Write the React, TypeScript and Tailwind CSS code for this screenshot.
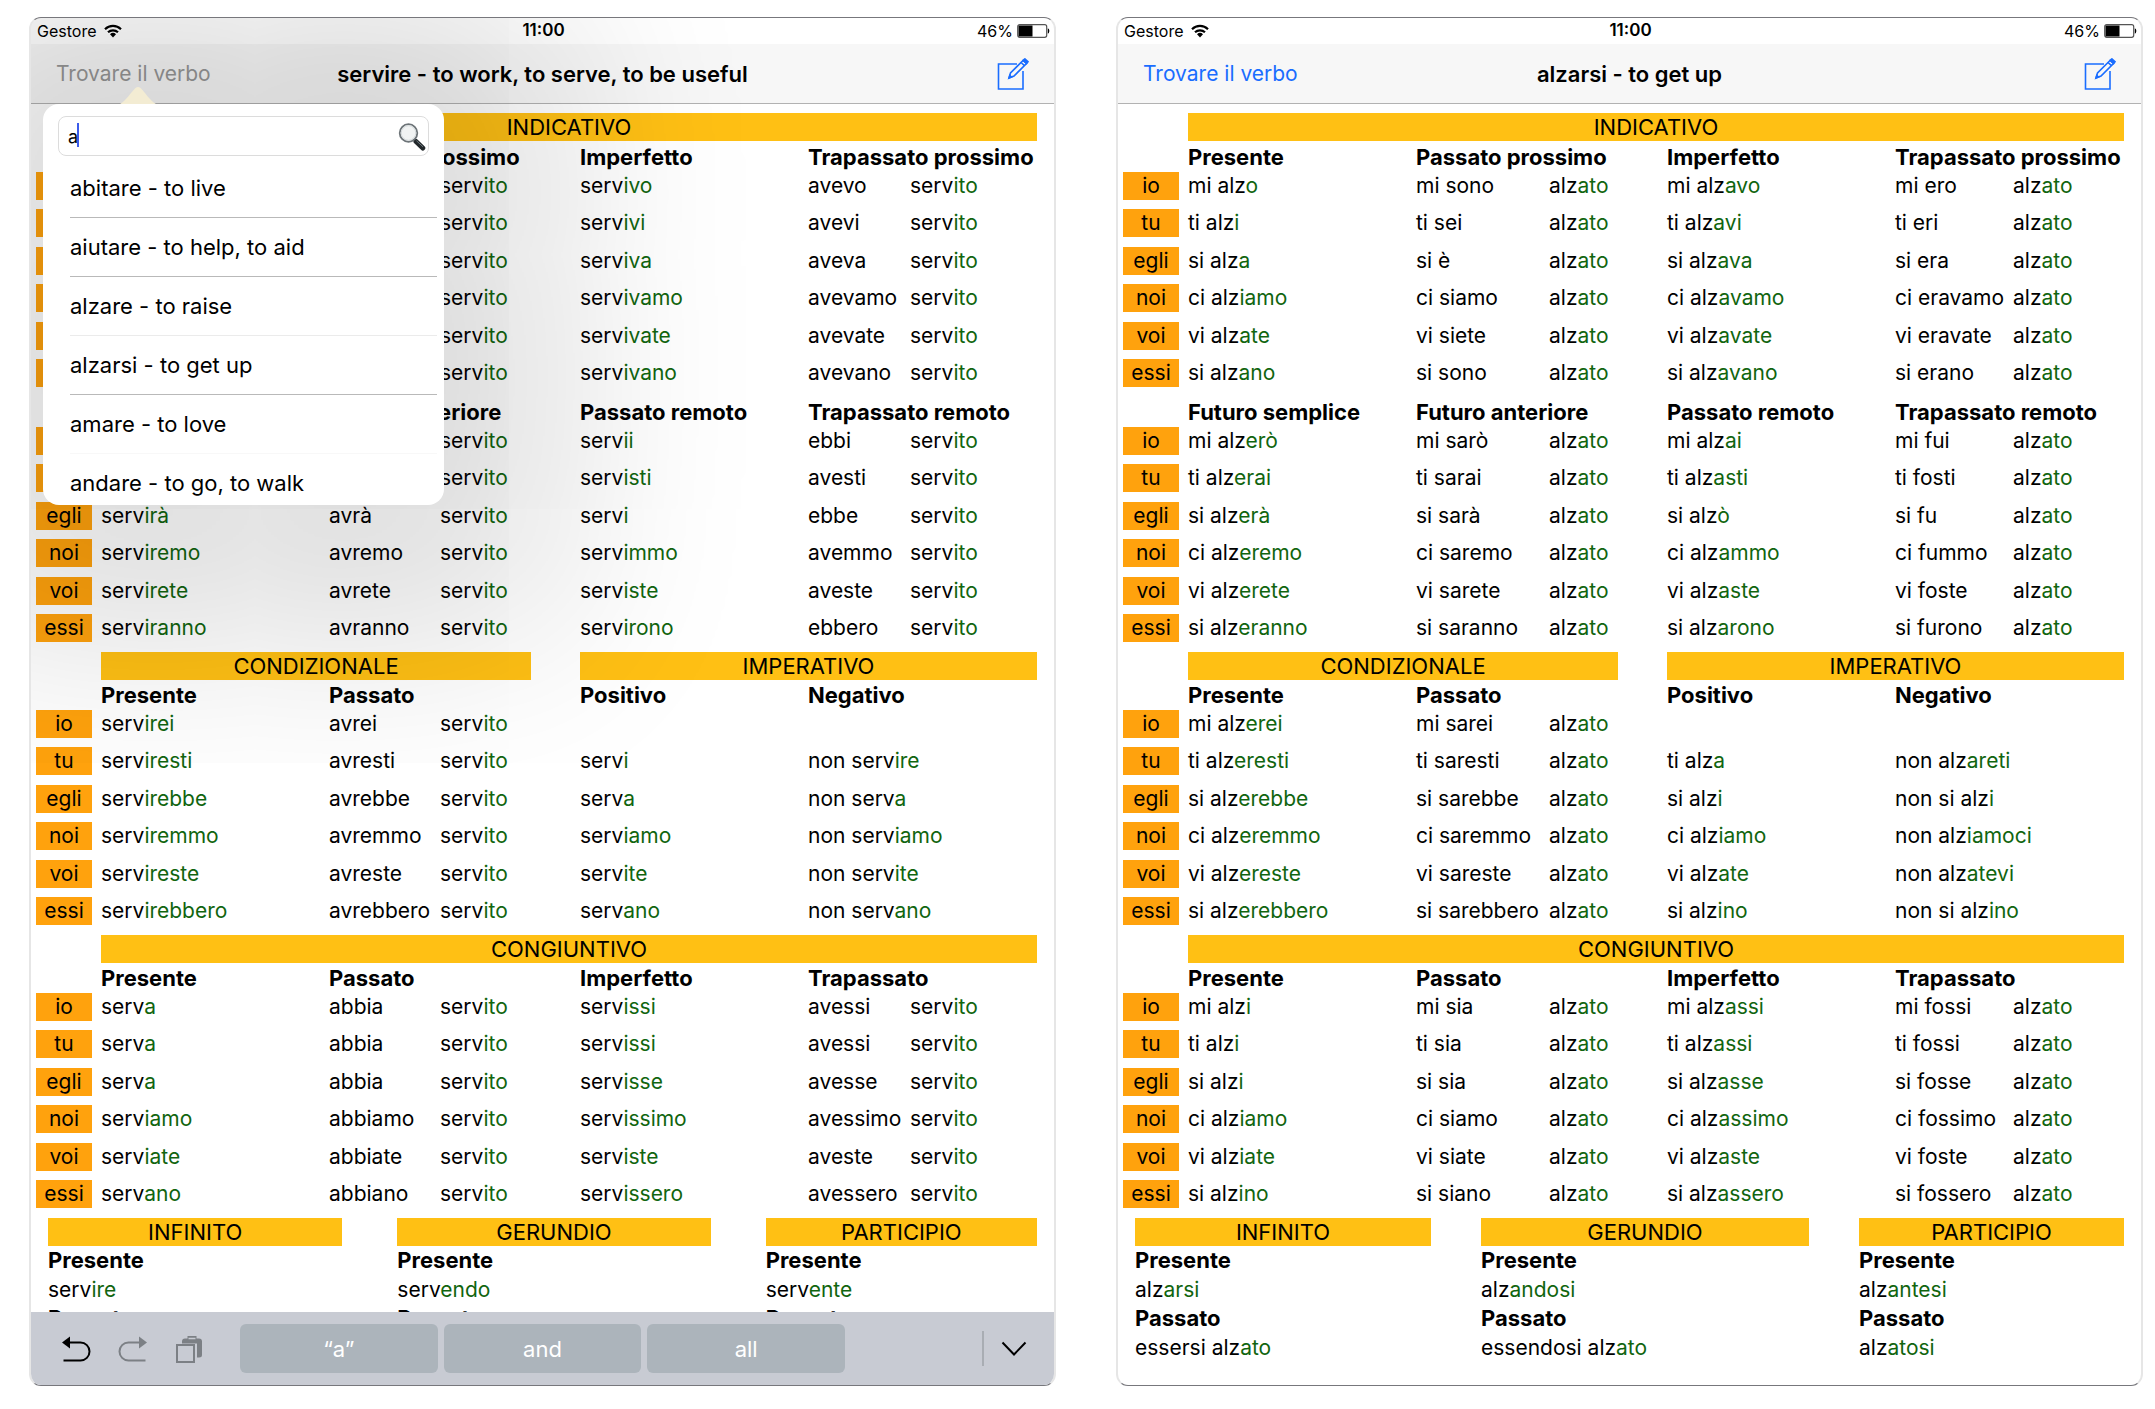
import { useState } from "react";

type Block = {
  heads: [string, string, string, string];
  rows: string[][];
};

interface Verb {
  id: string;
  title: string;
  participle: string;
  cols: string[];
  indicativo: [Block, Block];
  condizionale: Block;
  congiuntivo: Block;
  nonFinite: { name: string; entries: [string, string?][] }[];
  nonFiniteGrid: string;
}

const PRONOUNS = ["io", "tu", "egli", "noi", "voi", "essi"];

// "|" splits the stem from the ending, "_" marks an empty cell
function rows(...lines: string[]) {
  return lines.map((l) => l.split(",").map((s) => (s === "_" ? "" : s)));
}

// cells that lie under the open search popover are left empty
const SERVIRE: Verb = {
  id: "servire",
  title: "servire - to work, to serve, to be useful",
  participle: "serv|ito",
  cols: ["w-[65px]", "w-[228px]", "w-[111px]", "w-[140px]", "w-[228px]", "w-[102px]", "w-[127px]"],
  indicativo: [
    {
      heads: ["", "Passato prossimo", "Imperfetto", "Trapassato prossimo"],
      rows: rows(
        "_,_,serv|ivo,avevo",
        "_,_,serv|ivi,avevi",
        "_,_,serv|iva,aveva",
        "_,_,serv|ivamo,avevamo",
        "_,_,serv|ivate,avevate",
        "_,_,serv|ivano,avevano",
      ),
    },
    {
      heads: ["", "Futuro anteriore", "Passato remoto", "Trapassato remoto"],
      rows: rows(
        "_,_,serv|ii,ebbi",
        "_,_,serv|isti,avesti",
        "serv|irà,avrà,serv|i,ebbe",
        "serv|iremo,avremo,serv|immo,avemmo",
        "serv|irete,avrete,serv|iste,aveste",
        "serv|iranno,avranno,serv|irono,ebbero",
      ),
    },
  ],
  condizionale: {
    heads: ["Presente", "Passato", "Positivo", "Negativo"],
    rows: rows(
      "serv|irei,avrei,_,_",
      "serv|iresti,avresti,serv|i,non serv|ire",
      "serv|irebbe,avrebbe,serv|a,non serv|a",
      "serv|iremmo,avremmo,serv|iamo,non serv|iamo",
      "serv|ireste,avreste,serv|ite,non serv|ite",
      "serv|irebbero,avrebbero,serv|ano,non serv|ano",
    ),
  },
  congiuntivo: {
    heads: ["Presente", "Passato", "Imperfetto", "Trapassato"],
    rows: rows(
      "serv|a,abbia,serv|issi,avessi",
      "serv|a,abbia,serv|issi,avessi",
      "serv|a,abbia,serv|isse,avesse",
      "serv|iamo,abbiamo,serv|issimo,avessimo",
      "serv|iate,abbiate,serv|iste,aveste",
      "serv|ano,abbiano,serv|issero,avessero",
    ),
  },
  nonFinite: [
    { name: "INFINITO", entries: [["Presente", "serv|ire"], ["Passato"]] },
    { name: "GERUNDIO", entries: [["Presente", "serv|endo"], ["Passato"]] },
    { name: "PARTICIPIO", entries: [["Presente", "serv|ente"], ["Passato"]] },
  ],
  nonFiniteGrid: "grid-cols-[294fr_313fr_271fr] gap-x-[55px]",
};

const ALZARSI: Verb = {
  id: "alzarsi",
  title: "alzarsi - to get up",
  participle: "alz|ato",
  cols: ["w-[65px]", "w-[228px]", "w-[133px]", "w-[118px]", "w-[228px]", "w-[118px]", "w-[111px]"],
  indicativo: [
    {
      heads: ["Presente", "Passato prossimo", "Imperfetto", "Trapassato prossimo"],
      rows: rows(
        "mi alz|o,mi sono,mi alz|avo,mi ero",
        "ti alz|i,ti sei,ti alz|avi,ti eri",
        "si alz|a,si è,si alz|ava,si era",
        "ci alz|iamo,ci siamo,ci alz|avamo,ci eravamo",
        "vi alz|ate,vi siete,vi alz|avate,vi eravate",
        "si alz|ano,si sono,si alz|avano,si erano",
      ),
    },
    {
      heads: ["Futuro semplice", "Futuro anteriore", "Passato remoto", "Trapassato remoto"],
      rows: rows(
        "mi alz|erò,mi sarò,mi alz|ai,mi fui",
        "ti alz|erai,ti sarai,ti alz|asti,ti fosti",
        "si alz|erà,si sarà,si alz|ò,si fu",
        "ci alz|eremo,ci saremo,ci alz|ammo,ci fummo",
        "vi alz|erete,vi sarete,vi alz|aste,vi foste",
        "si alz|eranno,si saranno,si alz|arono,si furono",
      ),
    },
  ],
  condizionale: {
    heads: ["Presente", "Passato", "Positivo", "Negativo"],
    rows: rows(
      "mi alz|erei,mi sarei,_,_",
      "ti alz|eresti,ti saresti,ti alz|a,non alz|areti",
      "si alz|erebbe,si sarebbe,si alz|i,non si alz|i",
      "ci alz|eremmo,ci saremmo,ci alz|iamo,non alz|iamoci",
      "vi alz|ereste,vi sareste,vi alz|ate,non alz|atevi",
      "si alz|erebbero,si sarebbero,si alz|ino,non si alz|ino",
    ),
  },
  congiuntivo: {
    heads: ["Presente", "Passato", "Imperfetto", "Trapassato"],
    rows: rows(
      "mi alz|i,mi sia,mi alz|assi,mi fossi",
      "ti alz|i,ti sia,ti alz|assi,ti fossi",
      "si alz|i,si sia,si alz|asse,si fosse",
      "ci alz|iamo,ci siamo,ci alz|assimo,ci fossimo",
      "vi alz|iate,vi siate,vi alz|aste,vi foste",
      "si alz|ino,si siano,si alz|assero,si fossero",
    ),
  },
  nonFinite: [
    { name: "INFINITO", entries: [["Presente", "alz|arsi"], ["Passato", "essersi alz|ato"]] },
    { name: "GERUNDIO", entries: [["Presente", "alz|andosi"], ["Passato", "essendosi alz|ato"]] },
    { name: "PARTICIPIO", entries: [["Presente", "alz|antesi"], ["Passato", "alz|atosi"]] },
  ],
  nonFiniteGrid: "grid-cols-[296fr_328fr_265fr] gap-x-[50px]",
};

const RESULTS = [
  { label: "abitare - to live", line: "border-[#b9b9b9]" },
  { label: "aiutare - to help, to aid", line: "border-[#b9b9b9]" },
  { label: "alzare - to raise", line: "border-[#ebebeb]" },
  { label: "alzarsi - to get up", line: "border-[#b9b9b9]" },
  { label: "amare - to love", line: "border-[#f8f8f8]" },
  { label: "andare - to go, to walk", line: "border-transparent" },
];

export default function App() {
  return (
    <main className="grid grid-cols-2 gap-[60px] bg-white pt-[17px] pr-3 pb-[22px] pl-[29px] font-['Inter',sans-serif] text-[21px] leading-7 text-black">
      <Screen verb={SERVIRE} searching />
      <Screen verb={ALZARSI} />
    </main>
  );
}

function Screen({ verb, searching = false }: { verb: Verb; searching?: boolean }) {
  return (
    <section className="relative overflow-hidden rounded-xl border-x-2 border-y border-x-[#e6e6e6] border-y-[#77777c] bg-white">
      <StatusBar />
      <header className="grid h-[60px] grid-cols-[1fr_auto_1fr] items-center border-b border-[#b2b2b2] bg-[#f7f7f7] px-[25px]">
        <button className={`justify-self-start ${searching ? "text-[#969696]" : "text-[#1a6dff]"}`}>
          Trovare il verbo
        </button>
        <h1 className="text-[22px] font-semibold">{verb.title}</h1>
        <button className="justify-self-end" aria-label="Scrivere">
          <ComposeIcon />
        </button>
      </header>
      <div className="pt-[9px] pr-[17px] pb-[23px] pl-[5px]">
        <Conjugation verb={verb} />
        <NonFinite verb={verb} />
      </div>
      {searching && <SearchPopover />}
      {searching && <ShortcutBar />}
    </section>
  );
}

function StatusBar() {
  return (
    <div className="grid h-[26px] grid-cols-[1fr_auto_1fr] items-center pr-1 pl-[6px] text-base">
      <div className="flex items-center gap-2">
        Gestore
        <svg viewBox="0 0 18 14" className="h-[14px] w-[18px]">
          <g fill="none" stroke="#000" strokeWidth="2.2">
            <path d="M1 5.2a11.4 11.4 0 0 1 16 0" />
            <path d="M4 8.3a7.2 7.2 0 0 1 10 0" />
          </g>
          <path d="M9 13.4l-3-3.2a4.3 4.3 0 0 1 6 0z" />
        </svg>
      </div>
      <div className="text-[17px] font-semibold">11:00</div>
      <div className="flex items-center justify-end gap-1">
        46%
        <svg viewBox="0 0 33 14" className="h-[14px] w-[33px]">
          <rect x="0.7" y="0.7" width="29" height="12.6" rx="2" fill="#fff" stroke="#555" strokeWidth="1.2" />
          <rect x="1.5" y="1.5" width="14" height="11" />
          <path d="M30.8 4.3c2 .6 2 4.8 0 5.4z" />
        </svg>
      </div>
    </div>
  );
}

function Word({ text }: { text: string }) {
  const [stem, ending] = text.split("|");
  return (
    <>
      {stem}
      {ending && <span className="text-[#11650f]">{ending}</span>}
    </>
  );
}

function Bar({ children, className = "" }: { children: string; className?: string }) {
  return (
    <div className={`h-7 bg-[#ffc014] text-center text-[22px] font-normal ${className}`}>
      {children}
    </div>
  );
}

function Conjugation({ verb }: { verb: Verb }) {
  return (
    <table className="w-full table-fixed border-collapse text-left whitespace-nowrap">
      <colgroup>
        {verb.cols.map((w, i) => (
          <col key={i} className={w} />
        ))}
      </colgroup>
      <tbody>
        <tr>
          <td />
          <th colSpan={6} className="p-0">
            <Bar>INDICATIVO</Bar>
          </th>
        </tr>
        <HeadRow heads={verb.indicativo[0].heads} />
      </tbody>
      <PersonRows block={verb.indicativo[0]} participle={verb.participle} />
      <tbody>
        <HeadRow heads={verb.indicativo[1].heads} tight />
      </tbody>
      <PersonRows block={verb.indicativo[1]} participle={verb.participle} />
      <tbody>
        <tr>
          <td />
          <th colSpan={3} className="p-0">
            <Bar className="mr-[49px]">CONDIZIONALE</Bar>
          </th>
          <th colSpan={3} className="p-0">
            <Bar>IMPERATIVO</Bar>
          </th>
        </tr>
        <HeadRow heads={verb.condizionale.heads} tight />
      </tbody>
      <PersonRows block={verb.condizionale} participle={verb.participle} imperative />
      <tbody>
        <tr>
          <td />
          <th colSpan={6} className="p-0">
            <Bar>CONGIUNTIVO</Bar>
          </th>
        </tr>
        <HeadRow heads={verb.congiuntivo.heads} tight />
      </tbody>
      <PersonRows block={verb.congiuntivo} participle={verb.participle} />
    </table>
  );
}

function HeadRow({ heads, tight = false }: { heads: string[]; tight?: boolean }) {
  return (
    <tr className={tight ? "h-[30px]" : "h-[31px]"}>
      <td />
      {heads.map((h, i) => (
        <th key={i} colSpan={i % 2 ? 2 : 1} className="p-0 text-[22px] font-bold">
          {h}
        </th>
      ))}
    </tr>
  );
}

function PersonRows({
  block,
  participle,
  imperative = false,
}: {
  block: Block;
  participle: string;
  imperative?: boolean;
}) {
  return (
    <tbody className="align-top">
      {block.rows.map(([first, aux, third, fourth], i) => (
        <tr key={i} className="odd:h-[37px] even:h-[38px]">
          <th scope="row" className="p-0 font-normal">
            <div className="mr-[9px] h-7 bg-[#ffa20d] text-center">{first && PRONOUNS[i]}</div>
          </th>
          <td className="p-0">
            <Word text={first} />
          </td>
          <td className="p-0">{aux}</td>
          <td className="p-0">
            <Word text={participle} />
          </td>
          <td className="p-0">
            <Word text={third} />
          </td>
          <td className="p-0" colSpan={imperative ? 2 : 1}>
            <Word text={fourth} />
          </td>
          {!imperative && (
            <td className="p-0">
              <Word text={participle} />
            </td>
          )}
        </tr>
      ))}
    </tbody>
  );
}

function NonFinite({ verb }: { verb: Verb }) {
  return (
    <div className={`grid pl-3 ${verb.nonFiniteGrid}`}>
      {verb.nonFinite.map((form) => (
        <div key={form.name}>
          <Bar>{form.name}</Bar>
          <dl className="leading-[29px]">
            {form.entries.map(([tense, value]) => (
              <div key={tense}>
                <dt className="text-[22px] leading-[29px] font-bold">{tense}</dt>
                {value && (
                  <dd>
                    <Word text={value} />
                  </dd>
                )}
              </div>
            ))}
          </dl>
        </div>
      ))}
    </div>
  );
}

function SearchPopover() {
  const [q, setQ] = useState("a");

  return (
    <div className="absolute top-[86px] left-3 h-[401px] w-[401px] rounded-2xl bg-white shadow-[0_10px_200px_120px_rgba(0,0,0,0.14)]">
      <svg viewBox="0 0 36 17" className="absolute bottom-full left-[77px] h-[17px] w-9">
        <path d="M0 17C5 15 12 4 15.500 1Q18-1 20.500 1C24 4 31 15 36 17z" fill="#f3ecd3" />
      </svg>
      <div className="h-full overflow-hidden rounded-2xl">
        <div className="relative mx-[15px] mt-3">
          <input
            type="text"
            aria-label="Trovare il verbo"
            value={q}
            onChange={(e) => setQ(e.target.value)}
            className="h-10 w-full rounded-lg border border-[#dcdcdc] px-[9px] text-lg outline-none"
          />
          <span className="absolute top-[7px] left-[19px] h-6 w-[2px] bg-[#3b5bea]" />
          <MagnifierIcon />
        </div>
        <ul className="mt-[3px] mr-[7px] ml-[27px] text-[22px]">
          {RESULTS.map((r) => (
            <li key={r.label} className={`border-b ${r.line}`}>
              <button className="flex h-[58px] w-full items-center text-left">{r.label}</button>
            </li>
          ))}
        </ul>
      </div>
    </div>
  );
}

function ShortcutBar() {
  return (
    <div className="absolute inset-x-0 bottom-0 flex h-[73px] items-center bg-[#c8cbd3] pr-[27px] pl-[30px]">
      <div className="flex items-center gap-[27px]">
        <button aria-label="Annulla">
          <UndoIcon className="h-7 w-[30px] text-black" />
        </button>
        <button aria-label="Ripristina">
          <UndoIcon className="h-7 w-[30px] -scale-x-100 text-[#7c8085]" />
        </button>
        <button aria-label="Incolla">
          <PasteIcon />
        </button>
      </div>
      <div className="ml-[37px] grid w-[605px] grid-cols-3 gap-[6px] text-[22px] text-white">
        <button className="h-[49px] rounded-md bg-[#acb4bb]">“a”</button>
        <button className="h-[49px] rounded-md bg-[#acb4bb]">and</button>
        <button className="h-[49px] rounded-md bg-[#acb4bb]">all</button>
      </div>
      <div className="ml-auto flex items-center gap-[17px]">
        <span className="h-[35px] w-[2px] bg-[#a9adb3]" />
        <button aria-label="Nascondi tastiera">
          <svg viewBox="0 0 26 16" className="h-4 w-[26px]" fill="none" stroke="#000" strokeWidth="2">
            <path d="M1.500 1.500L13 13.500L24.500 1.500" />
          </svg>
        </button>
      </div>
    </div>
  );
}

function ComposeIcon() {
  return (
    <svg viewBox="0 0 32 32" className="h-8 w-8" fill="none" stroke="#1a6dff" strokeWidth="1.6">
      <path d="M20 6H1.500V31H26V13" />
      <path d="M12 20l1.500-5L26 2.500l3.500 3L17 18z" />
      <path d="M24 4.500l3.500 3.200" />
      <path d="M26.300 2.200l1.600-1.300 3.200 2.800-1.500 1.800z" fill="#1a6dff" />
      <path d="M12 20l.8-2.500 1.600 1.500z" fill="#1a6dff" />
    </svg>
  );
}

function MagnifierIcon() {
  return (
    <svg viewBox="0 0 28 30" className="absolute top-[6px] right-[3px] h-[30px] w-7">
      <path d="M15.500 17l3 3" stroke="#8b9096" strokeWidth="2.500" />
      <path d="M18 19.500l6.800 6.500" stroke="#22282b" strokeWidth="5" strokeLinecap="round" />
      <path d="M18.500 18.800l6.500 6" stroke="#6f7a80" strokeWidth="1" />
      <circle cx="10.500" cy="11" r="8.800" fill="#f1f3f3" stroke="#6d7478" strokeWidth="1.800" />
      <circle cx="10.500" cy="11" r="7.300" fill="none" stroke="#d5dadc" strokeWidth="1" />
    </svg>
  );
}

function UndoIcon({ className }: { className: string }) {
  return (
    <svg viewBox="0 0 30 28" className={className}>
      <path d="M1 7.500L9 1.500v12z" fill="currentColor" />
      <path
        d="M8 7.500h11.500a9 9 0 0 1 0 18H2.500"
        fill="none"
        stroke="currentColor"
        strokeWidth="2"
      />
    </svg>
  );
}

function PasteIcon() {
  return (
    <svg viewBox="0 0 28 28" className="h-7 w-7">
      <path
        d="M7 6.500q0-3 3-3h2.500V1h9v2.500h2.500q3 0 3 3V20q0 2.500-3 2.500h-2V8.500H7z"
        fill="#7c8085"
      />
      <path d="M13.500 3.500h7" stroke="#c8cbd3" strokeWidth="1.500" />
      <rect x="2" y="10" width="17" height="17" fill="none" stroke="#7c8085" strokeWidth="2" />
    </svg>
  );
}
